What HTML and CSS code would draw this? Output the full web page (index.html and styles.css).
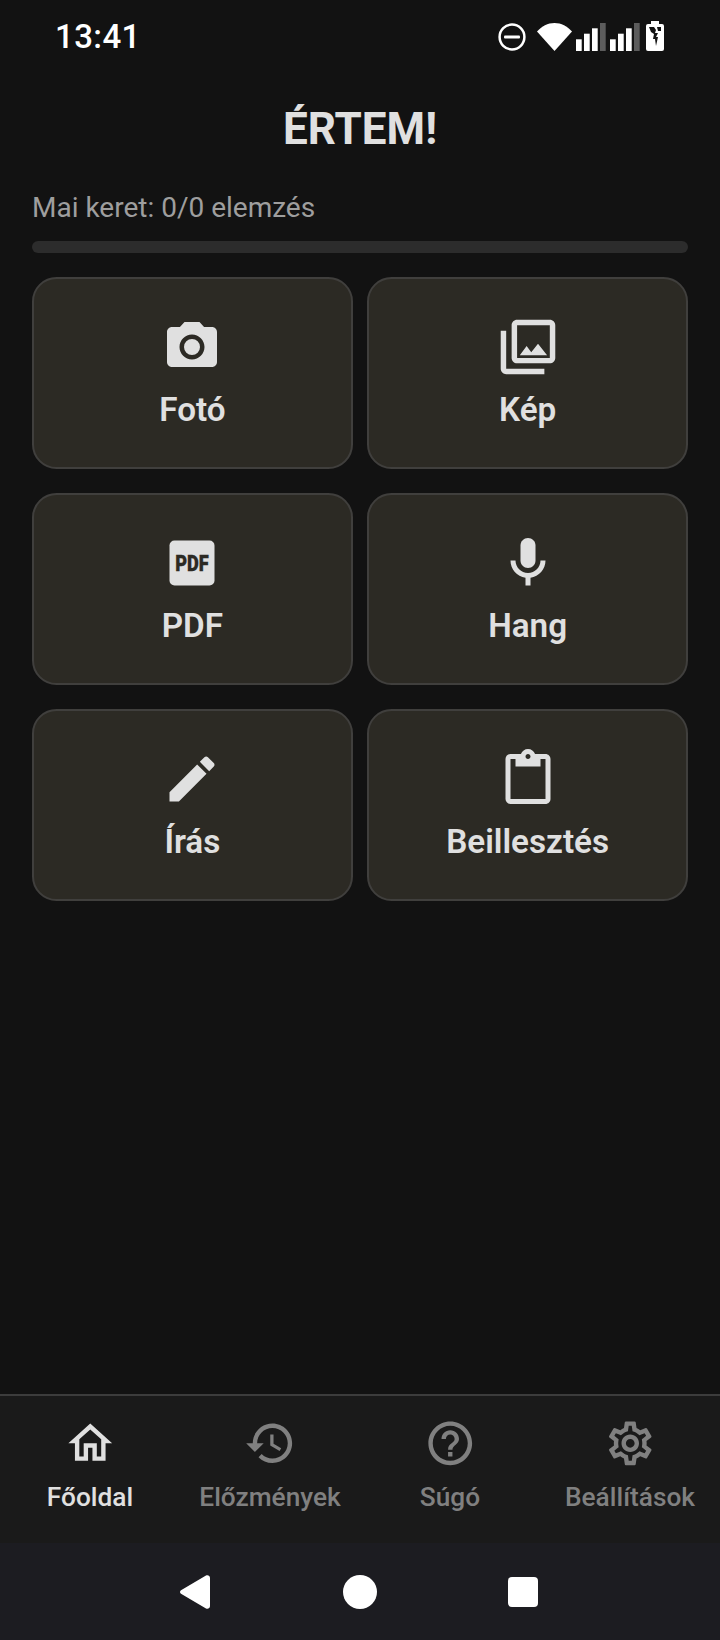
FILE: index.html
```html
<!DOCTYPE html>
<html lang="hu">
<head>
<meta charset="utf-8">
<title>ÉRTEM!</title>
<link rel="stylesheet" href="styles.css">
</head>
<body>
<div class="screen">
  <header class="status">
    <span class="time">13:41</span>
    <div class="status-icons">
      <svg class="si si-dnd" viewBox="0 0 28 28"><circle cx="14" cy="14" r="12.4" class="dnd-ring"/><rect x="6" y="12.4" width="16" height="3.2" rx="1" class="white"/></svg>
      <svg class="si si-wifi" viewBox="0 0 35 28"><path class="white" d="M0 8.6C4.6 3.2 10.8 0 17.5 0S30.400 3.200 35 8.600L17.500 28z"/></svg>
      <svg class="si si-signal" viewBox="0 0 30 28"><rect x="0" y="16.300" width="5.700" height="11.700" class="white"/><rect x="8" y="10.700" width="5.700" height="17.300" class="white"/><rect x="16" y="5.300" width="5.700" height="22.700" class="white"/><rect x="24" y="0" width="5.700" height="28" class="dim"/></svg>
      <svg class="si si-signal" viewBox="0 0 30 28"><rect x="0" y="16.300" width="5.700" height="11.700" class="white"/><rect x="8" y="10.700" width="5.700" height="17.300" class="white"/><rect x="16" y="5.300" width="5.700" height="22.700" class="white"/><rect x="24" y="0" width="5.700" height="28" class="dim"/></svg>
      <svg class="si si-batt" viewBox="0 0 18 30"><path class="white" d="M5 0h8v3h3a2 2 0 0 1 2 2v23a2 2 0 0 1-2 2H2a2 2 0 0 1-2-2V5a2 2 0 0 1 2-2h3z"/><path class="bg" d="M3 6h5l2 3-1 3h3l-2 4h2l-2 9-1-7H7l1-5-3-2zM11 6h4v4h-3z"/></svg>
    </div>
  </header>

  <main class="main">
    <h1 class="title">ÉRTEM!</h1>
    <p class="quota">Mai keret: 0/0 elemzés</p>
    <div class="track"></div>
    <div class="grid">
      <button class="card">
        <svg class="card-icon" viewBox="0 0 24 24"><path d="M12 15.200a3.200 3.200 0 1 0 0-6.400 3.200 3.200 0 0 0 0 6.400z"/><path d="M9 2 7.170 4H4c-1.100 0-2 .9-2 2v12c0 1.100.9 2 2 2h16c1.100 0 2-.9 2-2V6c0-1.100-.9-2-2-2h-3.170L15 2H9zm3 15c-2.760 0-5-2.240-5-5s2.240-5 5-5 5 2.240 5 5-2.240 5-5 5z"/></svg>
        <span class="card-label">Fotó</span>
      </button>
      <button class="card">
        <svg class="card-icon" viewBox="1 1 22 22"><path d="M20 4v12H8V4h12m0-2H8c-1.100 0-2 .9-2 2v12c0 1.100.9 2 2 2h12c1.100 0 2-.9 2-2V4c0-1.100-.9-2-2-2zm-8.500 9.670 1.690 2.260 2.480-3.100L19 15H9zM2 6v14c0 1.100.9 2 2 2h14v-2H4V6H2z"/></svg>
        <span class="card-label">Kép</span>
      </button>
      <button class="card">
        <svg class="card-icon" viewBox="0 0 24 24"><rect x="3" y="3" width="18" height="18" rx="2"/><text class="pdf-glyph" x="12" y="15" textLength="13.400" lengthAdjust="spacingAndGlyphs" text-anchor="middle">PDF</text></svg>
        <span class="card-label">PDF</span>
      </button>
      <button class="card">
        <svg class="card-icon" viewBox="0 0 24 24"><path d="M12 14c1.660 0 3-1.340 3-3V5c0-1.660-1.340-3-3-3S9 3.340 9 5v6c0 1.660 1.340 3 3 3z"/><path d="M17 11c0 2.760-2.240 5-5 5s-5-2.240-5-5H5c0 3.530 2.610 6.430 6 6.920V21h2v-3.080c3.390-.49 6-3.390 6-6.920h-2z"/></svg>
        <span class="card-label">Hang</span>
      </button>
      <button class="card">
        <svg class="card-icon" viewBox="0 0 24 24"><path d="M3 17.250V21h3.750L17.810 9.940l-3.750-3.750L3 17.250zM20.710 7.040c.39-.39.39-1.020 0-1.410l-2.340-2.340c-.39-.39-1.020-.39-1.410 0l-1.830 1.830 3.750 3.750 1.830-1.830z"/></svg>
        <span class="card-label">Írás</span>
      </button>
      <button class="card">
        <svg class="card-icon" viewBox="0 0 24 24"><path d="M19 2h-4.180C14.400.84 13.300 0 12 0c-1.300 0-2.400.84-2.820 2H5c-1.100 0-2 .9-2 2v16c0 1.100.9 2 2 2h14c1.100 0 2-.9 2-2V4c0-1.100-.9-2-2-2zm-7 0c.55 0 1 .45 1 1s-.45 1-1 1-1-.45-1-1 .45-1 1-1zm7 18H5V4h2v3h10V4h2v16z"/></svg>
        <span class="card-label">Beillesztés</span>
      </button>
    </div>
  </main>

  <nav class="tabs">
    <a class="tab active">
      <svg class="tab-icon" viewBox="0 0 24 24"><path d="M12 5.690l5 4.500V18h-2v-6H9v6H7v-7.810l5-4.500M12 3 2 12h3v8h6v-6h2v6h6v-8h3L12 3z"/></svg>
      <span class="tab-label">Főoldal</span>
    </a>
    <a class="tab">
      <svg class="tab-icon" viewBox="0 0 24 24"><path d="M13 3c-4.970 0-9 4.030-9 9H1l3.890 3.890.07.14L9 12H6c0-3.870 3.130-7 7-7s7 3.130 7 7-3.130 7-7 7c-1.930 0-3.680-.79-4.940-2.060l-1.420 1.420C8.270 19.990 10.510 21 13 21c4.970 0 9-4.030 9-9s-4.030-9-9-9zm-1 5v5l4.280 2.540.72-1.210-3.500-2.080V8H12z"/></svg>
      <span class="tab-label">Előzmények</span>
    </a>
    <a class="tab">
      <svg class="tab-icon" viewBox="0 0 24 24"><path d="M11 18h2v-2h-2v2zm1-16C6.480 2 2 6.480 2 12s4.480 10 10 10 10-4.480 10-10S17.520 2 12 2zm0 18c-4.410 0-8-3.590-8-8s3.590-8 8-8 8 3.590 8 8-3.590 8-8 8zm0-14c-2.210 0-4 1.790-4 4h2c0-1.100.9-2 2-2s2 .9 2 2c0 2-3 1.750-3 5h2c0-2.250 3-2.500 3-5 0-2.210-1.790-4-4-4z"/></svg>
      <span class="tab-label">Súgó</span>
    </a>
    <a class="tab">
      <svg class="tab-icon" viewBox="0 0 24 24"><path d="M19.430 12.980c.04-.32.07-.64.07-.98 0-.34-.03-.66-.07-.98l2.110-1.650c.19-.15.24-.42.12-.64l-2-3.460c-.09-.16-.26-.25-.44-.25-.06 0-.12.01-.17.03l-2.490 1c-.52-.4-1.080-.73-1.690-.98l-.38-2.650C14.460 2.180 14.250 2 14 2h-4c-.25 0-.46.18-.49.42l-.38 2.650c-.61.25-1.170.59-1.690.98l-2.490-1c-.06-.02-.12-.03-.18-.03-.17 0-.34.09-.43.25l-2 3.460c-.13.22-.07.49.12.64l2.110 1.650c-.04.32-.07.65-.07.98 0 .33.03.66.07.98l-2.110 1.650c-.19.15-.24.42-.12.64l2 3.460c.09.16.26.25.44.25.06 0 .12-.01.17-.03l2.490-1c.52.4 1.080.73 1.690.98l.38 2.650c.03.24.24.42.49.42h4c.25 0 .46-.18.49-.42l.38-2.650c.61-.25 1.170-.59 1.690-.98l2.490 1c.06.02.12.03.18.03.17 0 .34-.09.43-.25l2-3.460c.12-.22.07-.49-.12-.64l-2.110-1.650zm-1.980-1.710c.04.31.05.52.05.73 0 .21-.02.43-.05.73l-.14 1.130.89.7 1.080.84-.7 1.210-1.270-.51-1.040-.42-.9.68c-.43.32-.84.56-1.250.73l-1.060.43-.16 1.130-.2 1.350h-1.400l-.19-1.350-.16-1.130-1.060-.43c-.43-.18-.83-.41-1.230-.71l-.91-.7-1.060.43-1.270.51-.7-1.210 1.080-.84.89-.7-.14-1.130c-.03-.31-.05-.54-.05-.74s.02-.43.05-.73l.14-1.130-.89-.7-1.080-.84.7-1.210 1.270.51 1.040.42.9-.68c.43-.32.84-.56 1.250-.73l1.060-.43.16-1.130.2-1.350h1.390l.19 1.350.16 1.130 1.060.43c.43.18.83.41 1.230.71l.91.7 1.060-.43 1.270-.51.7 1.210-1.070.85-.89.7.14 1.130zM12 8c-2.210 0-4 1.790-4 4s1.790 4 4 4 4-1.790 4-4-1.790-4-4-4zm0 6c-1.100 0-2-.9-2-2s.9-2 2-2 2 .9 2 2-.9 2-2 2z"/></svg>
      <span class="tab-label">Beállítások</span>
    </a>
  </nav>

  <footer class="sysnav">
    <svg class="sys-back" viewBox="0 0 30 34"><path d="M1 15.300 26 .6C27.500-.2 30 .4 30 3v28c0 2.600-2.500 3.200-4 2.400L1 18.700c-1.300-.8-1.300-2.600 0-3.400z"/></svg>
    <span class="sys-home"></span>
    <span class="sys-recent"></span>
  </footer>
</div>
</body>
</html>
```

FILE: styles.css
```css
* { box-sizing: border-box; }
html, body { margin: 0; padding: 0; background: #121212; }
body { font-family: Roboto, "Noto Sans", sans-serif; }

.screen {
  width: 720px;
  height: 1640px;
  display: flex;
  flex-direction: column;
  background: #121212;
  overflow: hidden;
}

/* status bar */
.status {
  height: 74px;
  flex: none;
  display: flex;
  align-items: flex-start;
  justify-content: space-between;
  padding: 17px 56px 0 55px;
}
.time {
  color: #fff;
  font-size: 33px;
  font-weight: 500;
  line-height: 40px;
  letter-spacing: .4px;
}
.status-icons { display: flex; align-items: flex-end; height: 33.500px; gap: 0; }
.si { display: block; flex: none; }
.si-dnd { width: 28px; height: 28px; margin-right: 11px; margin-bottom: -.5px; }
.si-wifi { width: 35px; height: 28px; margin-right: 4px; }
.si-signal { width: 30px; height: 28px; margin-right: 4px; }
.si-signal + .si-signal { margin-right: 6px; }
.si-batt { width: 18px; height: 30px; margin-bottom: -.5px; }
.white { fill: #fff; }
.dim { fill: #5c5c5c; }
.bg { fill: #121212; }
.dnd-ring { fill: none; stroke: #fff; stroke-width: 2.500; }

/* main */
.main {
  flex: 1;
  min-height: 0;
  padding: 0 32px;
}
.title {
  margin: 0;
  text-align: center;
  color: #e0e0e0;
  font-size: 44px;
  font-weight: 700;
  line-height: 49px;
  padding-top: 31px;
}
.quota {
  margin: 36.500px 0 0;
  color: #9e9e9e;
  font-size: 28px;
  line-height: 33px;
}
.track {
  height: 12.250px;
  margin-top: 17.500px;
  background: #2c2c2c;
  border-radius: 6px;
}
.grid {
  margin-top: 24px;
  display: grid;
  grid-template-columns: 1fr 1fr;
  grid-auto-rows: 191.500px;
  column-gap: 14.500px;
  row-gap: 24.500px;
}
.card {
  display: flex;
  flex-direction: column;
  align-items: center;
  justify-content: center;
  gap: 14px;
  padding: 0 0 1px;
  background: #2c2a24;
  border: 2px solid #403f3d;
  border-radius: 24.500px;
  font-family: inherit;
}
.card-icon { width: 60px; height: 60px; display: block; fill: #e0e0e0; }
.card-label {
  color: #e0e0e0;
  font-size: 33.250px;
  font-weight: 600;
  line-height: 37px;
}
.pdf-glyph {
  fill: #2c2a24;
  stroke: #2c2a24;
  stroke-width: .15px;
  font-family: Roboto, sans-serif;
  font-size: 8.500px;
  font-weight: 900;
}

/* bottom tabs */
.tabs {
  height: 149px;
  flex: none;
  display: flex;
  background: #1a1a1a;
  border-top: 2px solid #3c3c3c;
  padding-top: 21px;
}
.tab {
  flex: 1 1 0;
  min-width: 0;
  display: flex;
  flex-direction: column;
  align-items: center;
  gap: 12px;
  color: #808080;
}
.tab.active { color: #e0e0e0; }
.tab-icon { width: 52.500px; height: 52.500px; display: block; fill: currentColor; }
.tab-label {
  font-size: 26.250px;
  font-weight: 500;
  line-height: 31px;
}

/* android navigation */
.sysnav {
  height: 97px;
  flex: none;
  display: flex;
  align-items: center;
  justify-content: center;
  gap: 0;
  padding-right: 2px;
  background: #1c1c21;
}
.sys-back { width: 30px; height: 34px; fill: #fff; display: block; margin-right: 133px; }
.sys-home { width: 34px; height: 34px; border-radius: 50%; background: #fff; margin-right: 131px; }
.sys-recent { width: 30px; height: 30px; border-radius: 4px; background: #fff; }
```
